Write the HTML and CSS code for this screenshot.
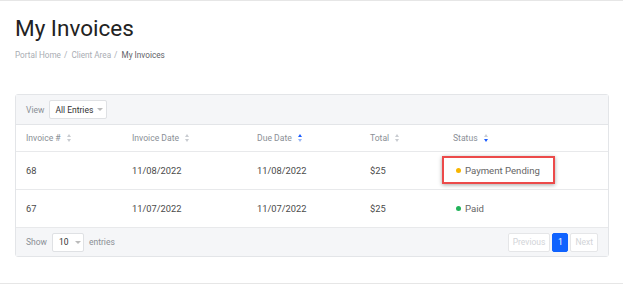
FILE: index.html
```html
<html>
    <head>
        <title>My Invoices</title>
        <meta charset="UTF-8">
        <link rel="stylesheet" href="styles.css">
    </head>
    <body>
        <div class="page">
            <h1 class="page-title">My Invoices</h1>
            <div class="breadcrumb">
                <span class="crumb">Portal Home</span><span class="sep">/</span>
                <span class="crumb">Client Area</span><span class="sep">/</span>
                <span class="crumb active">My Invoices</span>
            </div>

            <div class="card">
                <div class="card-top">
                    <span class="muted">View</span>
                    <div class="select wide">All Entries <span class="caret"></span></div>
                </div>
                <table class="invoices">
                    <thead>
                        <tr>
                            <th class="c1">Invoice # <span class="sort"></span></th>
                            <th class="c2">Invoice Date <span class="sort"></span></th>
                            <th class="c3">Due Date <span class="sort up"></span></th>
                            <th class="c4">Total <span class="sort"></span></th>
                            <th>Status <span class="sort down"></span></th>
                        </tr>
                    </thead>
                    <tbody>
                        <tr>
                            <td>68</td>
                            <td>11/08/2022</td>
                            <td>11/08/2022</td>
                            <td>$25</td>
                            <td class="status-cell">
                                <span class="dot pending"></span><span class="status">Payment Pending</span>
                                <div class="highlight"></div>
                            </td>
                        </tr>
                        <tr>
                            <td>67</td>
                            <td>11/07/2022</td>
                            <td>11/07/2022</td>
                            <td>$25</td>
                            <td><span class="dot paid"></span><span class="status">Paid</span></td>
                        </tr>
                    </tbody>
                </table>
                <div class="card-foot">
                    <div class="length">
                        <span class="muted">Show</span>
                        <div class="select">10 <span class="caret"></span></div>
                        <span class="muted">entries</span>
                    </div>
                    <div class="pager">
                        <span class="page-btn disabled">Previous</span>
                        <span class="page-btn current">1</span>
                        <span class="page-btn disabled">Next</span>
                    </div>
                </div>
            </div>
        </div>
    </body>
</html>
```

FILE: styles.css
```css
body {
    margin: 0;
    font-family: Roboto, "Liberation Sans", sans-serif;
    color: #333;
    background: #fff;
    border-top: 1px solid #e6e6e6;
    border-bottom: 1px solid #e6e6e6;
    height: 282px;
    overflow: hidden;
}

.page {
    padding: 0 14px 0 15px;
}

.page-title {
    margin: 14px 0 0;
    font-size: 22.5px;
    font-weight: 400;
    line-height: 26px;
    color: #222;
}

.breadcrumb {
    margin-top: 8px;
    font-size: 8.2px;
    line-height: 12px;
    color: #a9adb3;
}

.breadcrumb .sep {
    margin: 0 2px 0 3px;
}

.breadcrumb .active {
    color: #5f6368;
}

.card {
    margin-top: 33px;
    border: 1px solid #e3e5e8;
    border-radius: 3px;
}

.card-top {
    display: flex;
    align-items: center;
    gap: 5px;
    height: 29px;
    padding: 0 10px;
    background: #f5f6f8;
    border-bottom: 1px solid #e3e5e8;
}

.muted {
    font-size: 8.5px;
    color: #8a8f96;
}

.select {
    display: flex;
    align-items: center;
    gap: 6px;
    height: 17px;
    padding: 0 5px 0 6px;
    background: #fff;
    border: 1px solid #dfe1e4;
    border-radius: 2px;
    font-size: 8.5px;
    color: #333;
    white-space: nowrap;
}

.select.wide {
    padding: 0 3px 0 5px;
    gap: 4px;
}

.caret {
    width: 0;
    height: 0;
    border-left: 3px solid transparent;
    border-right: 3px solid transparent;
    border-top: 3px solid #bbb;
    margin-left: auto;
}

.invoices {
    width: 100%;
    border-collapse: collapse;
}

.invoices th {
    height: 26px;
    padding: 0 0 0 10px;
    text-align: left;
    font-size: 8.6px;
    font-weight: 400;
    color: #8a8f96;
    border-bottom: 1px solid #e8e9eb;
}

.invoices .c1 { width: 96px; }
.invoices .c2 { width: 115px; }
.invoices .c3 { width: 103px; }
.invoices .c4 { width: 73px; }

.invoices td {
    height: 38px;
    padding: 0 0 0 10px;
    font-size: 9.3px;
    color: #4a4a4a;
    border-bottom: 1px solid #e8e9eb;
}

.invoices tbody tr:last-child td {
    border-bottom: none;
}

.sort {
    display: inline-block;
    position: relative;
    width: 6px;
    height: 8px;
    margin-left: 4px;
    vertical-align: -1px;
}

.sort::before,
.sort::after {
    content: "";
    position: absolute;
    left: 0;
    border-left: 2.5px solid transparent;
    border-right: 2.5px solid transparent;
}

.sort::before {
    top: 0;
    border-bottom: 3px solid #c9ccd1;
}

.sort::after {
    bottom: 0;
    border-top: 3px solid #c9ccd1;
}

.sort.up::before { border-bottom-color: #1a5cff; }
.sort.up::after { border-top-color: #9db8f5; }
.sort.down::before { border-bottom-color: #c9ccd1; }
.sort.down::after { border-top-color: #1a5cff; }

.dot {
    display: inline-block;
    width: 5px;
    height: 5px;
    border-radius: 50%;
    margin: 0 4px 1px 3px;
    vertical-align: middle;
}

.dot.pending { background: #f7b500; }
.dot.paid { background: #22b35a; }

.status {
    color: #666;
    font-size: 9.6px;
}

.status-cell {
    position: relative;
}

.highlight {
    position: absolute;
    left: -1px;
    top: 4px;
    width: 109px;
    height: 24px;
    border: 2px solid #ec4a4a;
    box-shadow: 0 1px 4px rgba(0, 0, 0, 0.35);
}

.card-foot {
    display: flex;
    align-items: center;
    justify-content: space-between;
    height: 28px;
    padding: 0 10px;
    background: #f5f6f8;
    border-top: 1px solid #e8e9eb;
}

.length {
    display: flex;
    align-items: center;
    gap: 5px;
}

.length .select {
    width: 19px;
}

.pager {
    display: flex;
    gap: 2px;
}

.page-btn {
    display: flex;
    align-items: center;
    justify-content: center;
    height: 17px;
    padding: 0 4px;
    font-size: 8.5px;
    border: 1px solid #e5e6e8;
    background: #fff;
    border-radius: 2px;
}

.page-btn.disabled {
    color: #d2d4d8;
}

.page-btn.current {
    width: 14px;
    padding: 0;
    color: #fff;
    background: #0f62fe;
    border-color: #0f62fe;
}
```
